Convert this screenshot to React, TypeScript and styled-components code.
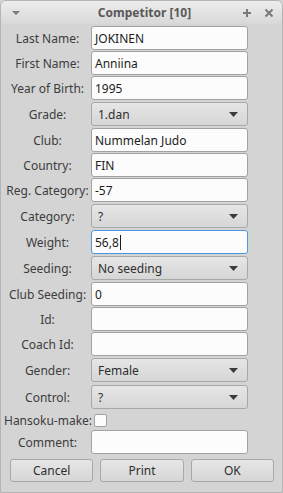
import styled, { createGlobalStyle } from "styled-components";

const GlobalStyle = createGlobalStyle`
  html, body {
    margin: 0;
    padding: 0;
    background: #d4d4d4;
  }
  body {
    font-family: "Noto Sans", "Open Sans", sans-serif;
  }
`;

type Row =
  | { label: string; kind: "edit"; value: string; focus?: boolean }
  | { label: string; kind: "combo"; value: string };

const rows: Row[] = [
  { label: "Last Name:", kind: "edit", value: "JOKINEN" },
  { label: "First Name:", kind: "edit", value: "Anniina" },
  { label: "Year of Birth:", kind: "edit", value: "1995" },
  { label: "Grade:", kind: "combo", value: "1.dan" },
  { label: "Club:", kind: "edit", value: "Nummelan Judo" },
  { label: "Country:", kind: "edit", value: "FIN" },
  { label: "Reg. Category:", kind: "edit", value: "-57" },
  { label: "Category:", kind: "combo", value: "?" },
  { label: "Weight:", kind: "edit", value: "56,8", focus: true },
  { label: "Seeding:", kind: "combo", value: "No seeding" },
  { label: "Club Seeding:", kind: "edit", value: "0" },
  { label: "Id:", kind: "edit", value: "" },
  { label: "Coach Id:", kind: "edit", value: "" },
  { label: "Gender:", kind: "combo", value: "Female" },
  { label: "Control:", kind: "combo", value: "?" },
];

const App = () => {
  return (
    <>
      <GlobalStyle />
      <Window>
        <TitleBar>
          <TitleIcon>
            <svg width="10" height="6" viewBox="0 0 10 6">
              <path d="M1 1 L9 1 L5 5 Z" fill="#7a7a7a" />
            </svg>
          </TitleIcon>
          <Title>Competitor [10]</Title>
          <TitleButtons>
            <svg width="10" height="10" viewBox="0 0 10 10">
              <path d="M5 1 V9 M1 5 H9" stroke="#7a7a7a" strokeWidth="2" />
            </svg>
            <svg width="10" height="10" viewBox="0 0 10 10">
              <path d="M1.5 1.5 L8.5 8.5 M8.5 1.5 L1.5 8.5" stroke="#7a7a7a" strokeWidth="2" />
            </svg>
          </TitleButtons>
        </TitleBar>

        <Form>
          {rows.map((row) => (
            <FormRow key={row.label} combo={row.kind === "combo"}>
              <Label>{row.label}</Label>
              {row.kind === "edit" ? (
                <Edit focus={!!row.focus}>
                  {row.value}
                  {row.focus && <Caret />}
                </Edit>
              ) : (
                <Combo>
                  <span>{row.value}</span>
                  <svg width="9" height="5" viewBox="0 0 9 5">
                    <path d="M0 0 H9 L4.5 5 Z" fill="#3a3a3a" />
                  </svg>
                </Combo>
              )}
            </FormRow>
          ))}
          <CheckRow>
            <Label>Hansoku-make:</Label>
            <CheckBox />
          </CheckRow>
          <FormRow combo={false}>
            <Label>Comment:</Label>
            <Edit focus={false} />
          </FormRow>
        </Form>

        <ButtonBar>
          <Button>Cancel</Button>
          <Button>Print</Button>
          <Button>OK</Button>
        </ButtonBar>
      </Window>
    </>
  );
};

const Window = styled.div`
  box-sizing: border-box;
  width: 283px;
  height: 493px;
  border: 1px solid #b4b4b4;
  border-radius: 6px 6px 0 0;
  background: #d4d4d4;
  overflow: hidden;
  font-size: 12px;
  color: #3c3c3c;
`;

const TitleBar = styled.div`
  height: 23px;
  display: flex;
  align-items: center;
  padding: 0 8px 0 10px;
  background: linear-gradient(#ededed, #d8d8d8);
`;

const TitleIcon = styled.div`
  width: 20px;
  display: flex;
  align-items: center;
  padding-top: 1px;
`;

const Title = styled.div`
  flex: 1;
  text-align: center;
  font-weight: bold;
  color: #585858;
  padding-left: 16px;
`;

const TitleButtons = styled.div`
  display: flex;
  gap: 12px;
  align-items: center;
`;

const Form = styled.div`
  display: flex;
  flex-direction: column;
  gap: 1px;
  padding: 2px 0 0 3px;
`;

const FormRow = styled.div<{ combo: boolean }>`
  display: grid;
  grid-template-columns: 87px 157px;
  align-items: center;
  margin: ${(p) => (p.combo ? "1px 0" : "0")};
`;

const Label = styled.div`
  text-align: center;
  white-space: nowrap;
  color: #3c3c3c;
`;

const Edit = styled.div<{ focus: boolean }>`
  box-sizing: border-box;
  height: 24px;
  display: flex;
  align-items: center;
  padding: 0 3px;
  border: 1px solid ${(p) => (p.focus ? "#5294e2" : "#a2a2a2")};
  border-radius: 3px;
  background: #fcfcfc;
  color: #1c1c1c;
`;

const Caret = styled.span`
  display: inline-block;
  width: 1px;
  height: 15px;
  background: #1c1c1c;
  margin-left: 1px;
`;

const Combo = styled.div`
  box-sizing: border-box;
  height: 24px;
  display: flex;
  align-items: center;
  justify-content: space-between;
  padding: 0 9px 0 6px;
  border: 1px solid #a8a8a8;
  border-radius: 3px;
  background: linear-gradient(#e6e6e6, #d6d6d6);
  color: #2e2e2e;
`;

const CheckRow = styled.div`
  display: grid;
  grid-template-columns: 87px 157px;
  align-items: center;
  height: 17px;
  margin-top: 1px;
`;

const CheckBox = styled.div`
  box-sizing: border-box;
  width: 13px;
  height: 13px;
  margin-left: 3px;
  border: 1px solid #a2a2a2;
  border-radius: 2px;
  background: #fcfcfc;
`;

const ButtonBar = styled.div`
  display: flex;
  gap: 7px;
  padding: 5px 8px 0 9px;
`;

const Button = styled.div`
  box-sizing: border-box;
  flex: 1;
  height: 23px;
  display: flex;
  align-items: center;
  justify-content: center;
  border: 1px solid #a8a8a8;
  border-radius: 3px;
  background: linear-gradient(#e6e6e6, #d6d6d6);
  color: #2e2e2e;
`;

export default App;
